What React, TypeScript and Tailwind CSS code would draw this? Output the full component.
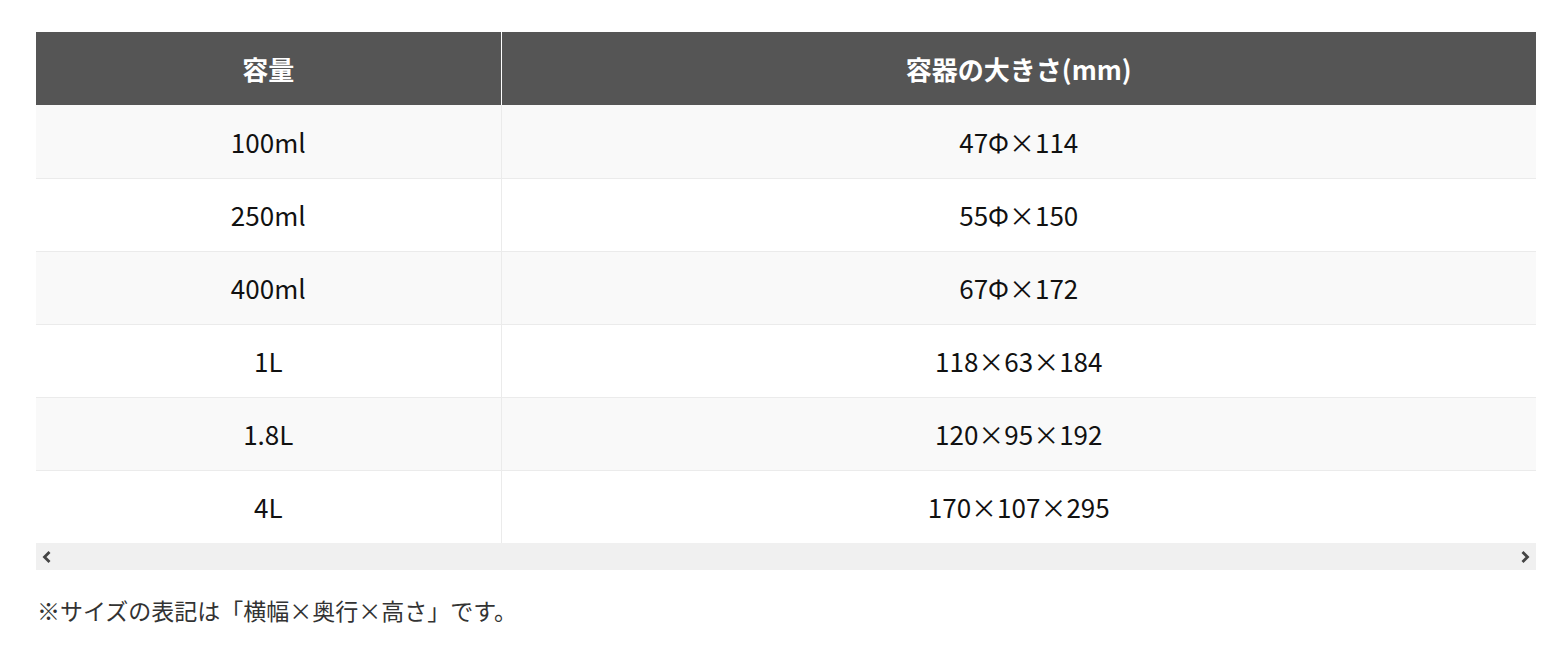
import React from "react";

const rows = [
  { cap: "100ml", size: "47Φ×114" },
  { cap: "250ml", size: "55Φ×150" },
  { cap: "400ml", size: "67Φ×172" },
  { cap: "1L", size: "118×63×184" },
  { cap: "1.8L", size: "120×95×192" },
  { cap: "4L", size: "170×107×295" },
];

const App = () => {
  return (
    <div className="min-h-screen bg-white pt-8 px-9 font-['Noto_Sans_CJK_JP','Noto_Sans',sans-serif] text-[#111]">
      <table className="w-[1500px] border-collapse table-fixed">
        <thead>
          <tr className="bg-[#555555] text-white h-[73px]">
            <th className="w-[465px] text-[26px] font-bold border-r border-white">容量</th>
            <th className="text-[26px] font-bold">容器の大きさ(mm)</th>
          </tr>
        </thead>
        <tbody>
          {rows.map((r, i) => (
            <tr
              key={r.cap}
              className={`h-[73px] ${i % 2 === 0 ? "bg-[#f9f9f9]" : "bg-white"} ${i < rows.length - 1 ? "border-b border-[#ebebeb]" : ""}`}
            >
              <td className="text-center text-[26px] border-r border-[#ebebeb]">{r.cap}</td>
              <td className="text-center text-[26px]">{r.size}</td>
            </tr>
          ))}
        </tbody>
      </table>
      <div className="w-[1500px] h-[27px] bg-[#f0f0f0] flex items-center justify-between px-[5px] text-[#444]">
        <svg width="12" height="14" viewBox="0 0 12 14">
          <path d="M8.5 2 L3.5 7 L8.5 12" stroke="currentColor" strokeWidth="2.8" fill="none" />
        </svg>
        <svg width="12" height="14" viewBox="0 0 12 14">
          <path d="M3.5 2 L8.5 7 L3.5 12" stroke="currentColor" strokeWidth="2.8" fill="none" />
        </svg>
      </div>
      <p className="mt-[23px] text-[23px] text-[#333] ml-px">※サイズの表記は「横幅×奥行×高さ」です。</p>
    </div>
  );
};

export default App;
